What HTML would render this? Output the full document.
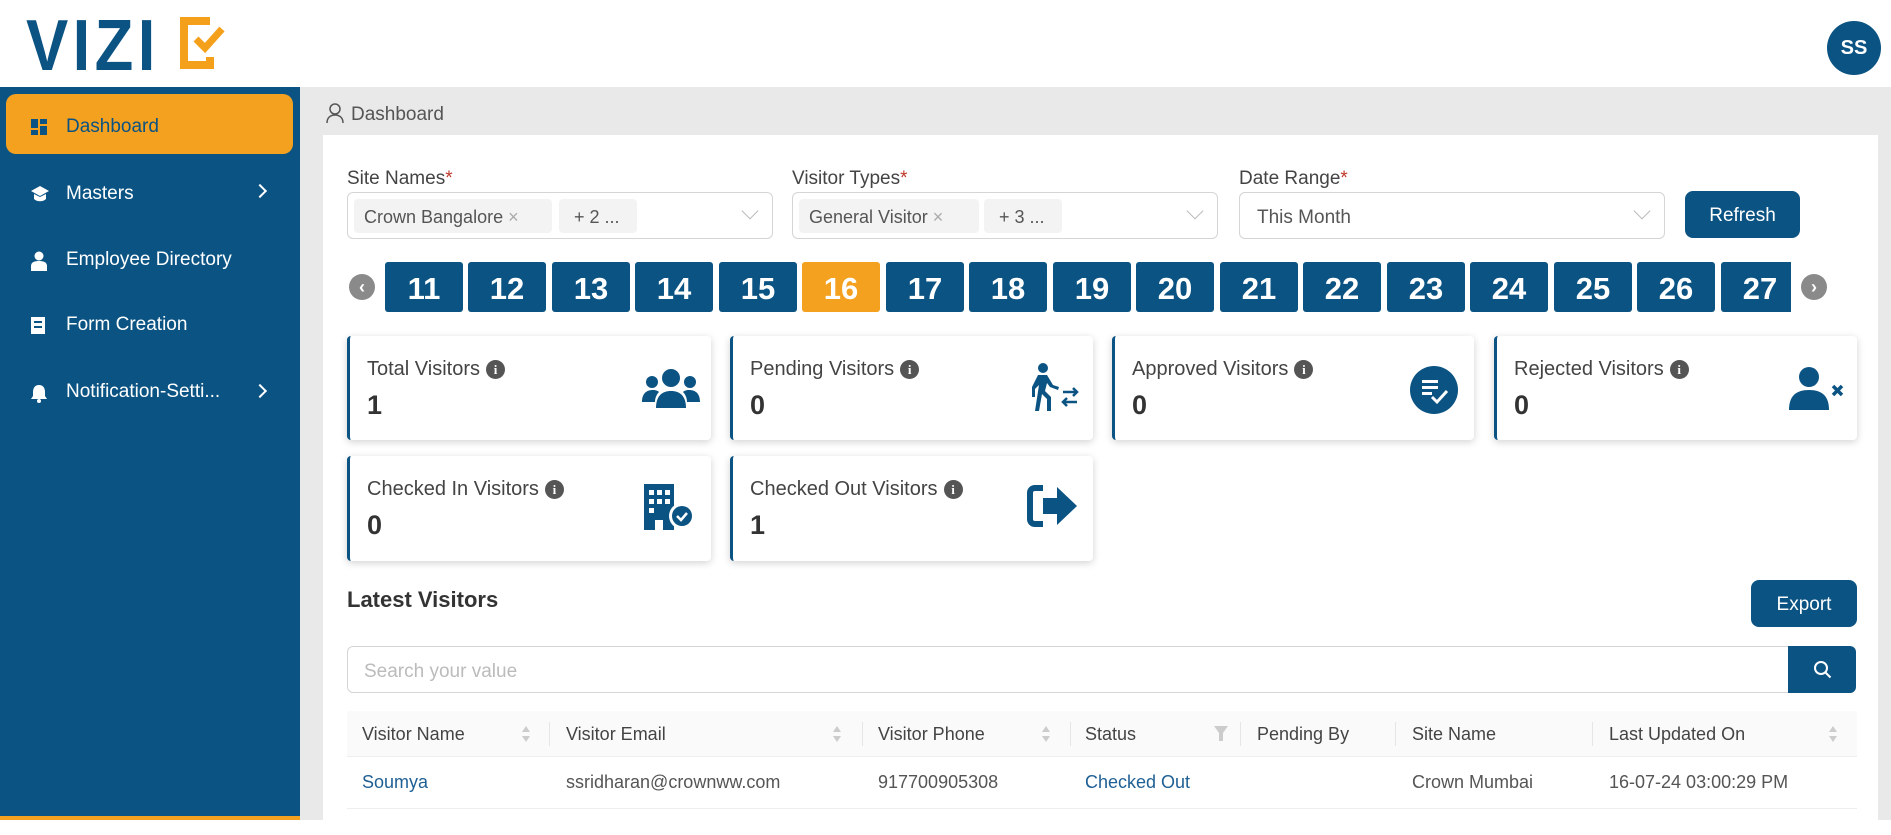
<!DOCTYPE html>
<html><head><meta charset="utf-8"><style>
*{box-sizing:border-box;margin:0;padding:0}
body{width:1891px;height:820px;overflow:hidden;font-family:"Liberation Sans",sans-serif;background:#fff;position:relative;color:#333}
.a{position:absolute}
.side{left:0;top:87px;width:300px;height:733px;background:#0b5383}
.mi{position:absolute;left:30px;color:#fff;font-size:19px;display:flex;align-items:center;gap:18px}
.mi .ic{width:18px;height:18px;display:inline-block}
.main{left:300px;top:87px;width:1591px;height:733px;background:#e9e9e9}
.panel{left:323px;top:135px;width:1555px;height:700px;background:#fff}
.lbl{font-size:19px;color:#444}
.lbl b{color:#c0392b;font-weight:normal}
.inp{height:47px;border:1px solid #d5d5d5;border-radius:6px;background:#fff}
.tag{position:absolute;top:6px;height:34px;background:#f3f3f3;border-radius:4px;font-size:18px;color:#555;line-height:36px;padding:0 10px}
.chev{position:absolute;right:16px;top:12px;width:12px;height:12px;border-right:1.5px solid #bbb;border-bottom:1.5px solid #bbb;transform:rotate(45deg)}
.btn{background:#0b5383;color:#fff;border-radius:8px;font-size:19px;display:flex;align-items:center;justify-content:center;padding-top:3px}
.d{position:absolute;top:262px;width:78px;height:50px;background:#0b5383;color:#fff;font-weight:bold;font-size:31px;display:flex;align-items:center;justify-content:center;border-radius:3px;padding-top:3px}
.card{background:#fff;border-left:3px solid #0b5383;border-radius:4px;box-shadow:0 2px 8px rgba(0,0,0,.18)}
.card .t{position:absolute;left:17px;top:22px;font-size:20px;color:#444;display:flex;align-items:center;gap:6px}
.card .n{position:absolute;left:17px;top:54px;font-size:27px;font-weight:bold;color:#333}
.info{width:19px;height:19px;border-radius:50%;background:#555;color:#fff;font-size:13px;font-weight:bold;display:inline-flex;align-items:center;justify-content:center;font-family:"Liberation Serif",serif}
.card svg{position:absolute}
.th{position:absolute;top:711px;height:46px;line-height:46px;font-size:18px;color:#444}
.td{position:absolute;top:757px;height:51px;line-height:51px;font-size:18px;color:#555}
.sep{position:absolute;top:722px;width:1px;height:24px;background:#e6e6e6}
.sort{position:absolute;top:724px;width:10px;height:20px}
</style></head><body>
<div class="a" style="left:26px;top:5px;font-size:72px;font-weight:bold;color:#0b5383;letter-spacing:5px;transform:scaleX(.88);transform-origin:left">VIZI</div>
<svg class="a" style="left:180px;top:17px" width="50" height="52" viewBox="0 0 50 52"><path d="M30 4H4V48H30V40" fill="none" stroke="#f5a01a" stroke-width="8"/><path d="M16 22l9 9 17-19" fill="none" stroke="#f5a01a" stroke-width="7"/></svg>
<div class="a" style="left:1827px;top:21px;width:54px;height:54px;border-radius:50%;background:#0b5383;color:#fff;font-weight:bold;font-size:20px;display:flex;align-items:center;justify-content:center">SS</div>

<div class="a side"></div>
<div class="a" style="left:0;top:816px;width:300px;height:4px;background:#f4a11f"></div>
<div class="a" style="left:6px;top:94px;width:287px;height:60px;background:#f4a11f;border-radius:10px"></div>
<div class="mi" style="top:116px;color:#0b5383"><span class="ic"><svg width="18" height="18"><rect x="1" y="1" width="7" height="9" fill="#0b5383"/><rect x="10" y="1" width="7" height="5" fill="#0b5383"/><rect x="1" y="12" width="7" height="5" fill="#0b5383"/><rect x="10" y="8" width="7" height="9" fill="#0b5383"/></svg></span>Dashboard</div>
<div class="mi" style="top:183px"><span class="ic"><svg width="20" height="18"><path d="M10 1L19 6 10 11 1 6z" fill="#fff"/><path d="M4 9v5c3 3 9 3 12 0V9l-6 3z" fill="#fff"/></svg></span>Masters</div>
<div class="a" style="left:255px;top:186px;width:10px;height:10px;border-right:2px solid #fff;border-top:2px solid #fff;transform:rotate(45deg)"></div>
<div class="mi" style="top:249px"><span class="ic"><svg width="18" height="20"><circle cx="9" cy="5" r="4.5" fill="#fff"/><path d="M1 20v-5c0-4 4-5 8-5s8 1 8 5v5z" fill="#fff"/></svg></span>Employee Directory</div>
<div class="mi" style="top:314px"><span class="ic"><svg width="16" height="18"><rect x="1" y="1" width="14" height="17" fill="#fff"/><rect x="4" y="5" width="8" height="2" fill="#0b5383"/><rect x="4" y="10" width="8" height="2" fill="#0b5383"/></svg></span>Form Creation</div>
<div class="mi" style="top:381px"><span class="ic"><svg width="18" height="20"><path d="M9 2c-4 0-6 3-6 7v4l-2 3h16l-2-3V9c0-4-2-7-6-7z" fill="#fff"/><circle cx="9" cy="18" r="2" fill="#fff"/></svg></span>Notification-Setti...</div>
<div class="a" style="left:255px;top:386px;width:10px;height:10px;border-right:2px solid #fff;border-top:2px solid #fff;transform:rotate(45deg)"></div>

<div class="a main"></div>
<svg class="a" style="left:326px;top:103px" width="18" height="20"><circle cx="9" cy="6" r="5" fill="none" stroke="#555" stroke-width="1.5"/><path d="M1 20c0-5 3-8 8-8s8 3 8 8" fill="none" stroke="#555" stroke-width="1.5"/></svg>
<div class="a" style="left:351px;top:104px;font-size:19px;color:#555">Dashboard</div>
<div class="a panel"></div>
<div class="a" style="left:1878px;top:87px;width:13px;height:733px;background:#e9e9e9"></div>

<div class="a lbl" style="left:347px;top:168px">Site Names<b>*</b></div>
<div class="a lbl" style="left:792px;top:168px">Visitor Types<b>*</b></div>
<div class="a lbl" style="left:1239px;top:168px">Date Range<b>*</b></div>
<div class="a inp" style="left:347px;top:192px;width:426px"><span class="tag" style="left:6px;width:198px">Crown Bangalore <span style="color:#aaa">×</span></span><span class="tag" style="left:211px;width:78px;padding:0 15px">+ 2 ...</span><span class="chev"></span></div>
<div class="a inp" style="left:792px;top:192px;width:426px"><span class="tag" style="left:6px;width:180px">General Visitor <span style="color:#aaa">×</span></span><span class="tag" style="left:191px;width:78px;padding:0 15px">+ 3 ...</span><span class="chev"></span></div>
<div class="a inp" style="left:1239px;top:192px;width:426px"><span style="position:absolute;left:17px;top:14px;font-size:19px;color:#555">This Month</span><span class="chev"></span></div>
<div class="a btn" style="left:1685px;top:191px;width:115px;height:47px">Refresh</div>

<div class="a" style="left:349px;top:274px;width:26px;height:26px;border-radius:50%;background:#8a8a8a;color:#fff;font-weight:bold;font-size:18px;display:flex;align-items:center;justify-content:center">‹</div>
<div class="a" style="left:1801px;top:274px;width:26px;height:26px;border-radius:50%;background:#8a8a8a;color:#fff;font-weight:bold;font-size:18px;display:flex;align-items:center;justify-content:center">›</div>
<div class="a" style="left:0;top:0;width:1791px;height:820px;overflow:hidden">
<div class="d" style="left:385px">11</div><div class="d" style="left:468px">12</div><div class="d" style="left:552px">13</div><div class="d" style="left:635px">14</div><div class="d" style="left:719px">15</div><div class="d" style="left:802px;background:#f4a11f">16</div><div class="d" style="left:886px">17</div><div class="d" style="left:969px">18</div><div class="d" style="left:1053px">19</div><div class="d" style="left:1136px">20</div><div class="d" style="left:1220px">21</div><div class="d" style="left:1303px">22</div><div class="d" style="left:1387px">23</div><div class="d" style="left:1470px">24</div><div class="d" style="left:1554px">25</div><div class="d" style="left:1637px">26</div><div class="d" style="left:1721px">27</div>
</div>

<div class="a card" style="left:347px;top:336px;width:364px;height:104px"><div class="t">Total Visitors <span class="info">i</span></div><div class="n">1</div>
<svg style="left:292px;top:32px" width="58" height="40" viewBox="0 0 58 40"><circle cx="29" cy="10" r="9" fill="#0b5383"/><circle cx="10" cy="14" r="6" fill="#0b5383"/><circle cx="48" cy="14" r="6" fill="#0b5383"/><path d="M14 40c0-12 6-17 15-17s15 5 15 17z" fill="#0b5383"/><path d="M0 34c0-8 4-12 11-12 3 0 5 1 6 2-3 3-4 7-4 10z" fill="#0b5383"/><path d="M58 34c0-8-4-12-11-12-3 0-5 1-6 2 3 3 4 7 4 10z" fill="#0b5383"/></svg></div>
<div class="a card" style="left:730px;top:336px;width:363px;height:104px"><div class="t">Pending Visitors <span class="info">i</span></div><div class="n">0</div>
<svg style="left:296px;top:26px" width="52" height="50" viewBox="0 0 52 50"><circle cx="14" cy="6" r="5" fill="#0b5383"/><path d="M9 13h9l6 10 6 2-1 3-8-3-3-4-2 8 6 6v14h-4V37l-5-5-3 17H6l4-26-4 4v8H3V25z" fill="#0b5383"/><path d="M34 30h14M44 26l4 4-4 4M48 40H34M38 36l-4 4 4 4" stroke="#0b5383" stroke-width="2.5" fill="none"/></svg></div>
<div class="a card" style="left:1112px;top:336px;width:362px;height:104px"><div class="t">Approved Visitors <span class="info">i</span></div><div class="n">0</div>
<svg style="left:295px;top:30px" width="48" height="48"><circle cx="24" cy="24" r="24" fill="#0b5383"/><rect x="12" y="14" width="16" height="3" fill="#fff"/><rect x="12" y="20" width="16" height="3" fill="#fff"/><rect x="12" y="26" width="10" height="3" fill="#fff"/><path d="M22 31l5 5 10-11" stroke="#fff" stroke-width="3" fill="none"/></svg></div>
<div class="a card" style="left:1494px;top:336px;width:363px;height:104px"><div class="t">Rejected Visitors <span class="info">i</span></div><div class="n">0</div>
<svg style="left:292px;top:30px" width="56" height="44"><circle cx="20" cy="11" r="10" fill="#0b5383"/><path d="M0 44c0-14 7-20 20-20s20 6 20 20z" fill="#0b5383"/><path d="M44 20l9 9M53 20l-9 9" stroke="#0b5383" stroke-width="3.5"/></svg></div>
<div class="a card" style="left:347px;top:456px;width:364px;height:105px"><div class="t">Checked In Visitors <span class="info">i</span></div><div class="n">0</div>
<svg style="left:292px;top:28px" width="56" height="46"><path d="M2 0h30v46H2z" fill="#0b5383"/><g fill="#fff"><rect x="7" y="6" width="5" height="5"/><rect x="15" y="6" width="5" height="5"/><rect x="23" y="6" width="5" height="5"/><rect x="7" y="15" width="5" height="5"/><rect x="15" y="15" width="5" height="5"/><rect x="23" y="15" width="5" height="5"/><rect x="7" y="24" width="5" height="5"/><rect x="13" y="36" width="8" height="10"/></g><circle cx="40" cy="32" r="13" fill="#fff"/><circle cx="40" cy="32" r="10" fill="#0b5383"/><path d="M35 32l4 4 6-7" stroke="#fff" stroke-width="2.5" fill="none"/></svg></div>
<div class="a card" style="left:730px;top:456px;width:363px;height:105px"><div class="t">Checked Out Visitors <span class="info">i</span></div><div class="n">1</div>
<svg style="left:294px;top:28px" width="52" height="44"><path d="M16 4H8C5 4 3 6 3 9v26c0 3 2 5 5 5h8" stroke="#0b5383" stroke-width="6" fill="none"/><path d="M16 14h14V3l20 19-20 19V30H16z" fill="#0b5383"/></svg></div>

<div class="a" style="left:347px;top:587px;font-size:22px;font-weight:bold;color:#333">Latest Visitors</div>
<div class="a btn" style="left:1751px;top:580px;width:106px;height:47px">Export</div>
<div class="a" style="left:347px;top:646px;width:1442px;height:47px;border:1px solid #d5d5d5;border-radius:6px 0 0 6px;font-size:19px;color:#bbb;padding:14px 16px 0">Search your value</div>
<div class="a" style="left:1788px;top:646px;width:68px;height:47px;background:#0b5383;border-radius:0 6px 6px 0"><svg style="position:absolute;left:25px;top:14px" width="20" height="20"><circle cx="8" cy="8" r="6" stroke="#fff" stroke-width="2" fill="none"/><path d="M12.5 12.5l5 5" stroke="#fff" stroke-width="2"/></svg></div>

<div class="a" style="left:347px;top:711px;width:1510px;height:46px;background:#fafafa;border-bottom:1px solid #eee"></div>
<div class="a" style="left:347px;top:808px;width:1510px;height:1px;background:#eee"></div>
<div class="th" style="left:362px">Visitor Name</div>
<div class="th" style="left:566px">Visitor Email</div>
<div class="th" style="left:878px">Visitor Phone</div>
<div class="th" style="left:1085px">Status</div>
<div class="th" style="left:1257px">Pending By</div>
<div class="th" style="left:1412px">Site Name</div>
<div class="th" style="left:1609px">Last Updated On</div>
<div class="sep" style="left:549px"></div><div class="sep" style="left:862px"></div><div class="sep" style="left:1070px"></div><div class="sep" style="left:1240px"></div><div class="sep" style="left:1395px"></div><div class="sep" style="left:1592px"></div>
<svg class="sort" style="left:521px" viewBox="0 0 10 20"><path d="M5 2l4 6H1z" fill="#ccc"/><path d="M5 18l4-6H1z" fill="#ccc"/></svg>
<svg class="sort" style="left:832px" viewBox="0 0 10 20"><path d="M5 2l4 6H1z" fill="#ccc"/><path d="M5 18l4-6H1z" fill="#ccc"/></svg>
<svg class="sort" style="left:1041px" viewBox="0 0 10 20"><path d="M5 2l4 6H1z" fill="#ccc"/><path d="M5 18l4-6H1z" fill="#ccc"/></svg>
<svg class="sort" style="left:1828px" viewBox="0 0 10 20"><path d="M5 2l4 6H1z" fill="#ccc"/><path d="M5 18l4-6H1z" fill="#ccc"/></svg>
<svg class="a" style="left:1214px;top:726px" width="14" height="16"><path d="M0 0h14L9 7v8H5V7z" fill="#ccc"/></svg>
<div class="td" style="left:362px;color:#1e5f94">Soumya</div>
<div class="td" style="left:566px">ssridharan@crownww.com</div>
<div class="td" style="left:878px">917700905308</div>
<div class="td" style="left:1085px;color:#1e5f94">Checked Out</div>
<div class="td" style="left:1412px">Crown Mumbai</div>
<div class="td" style="left:1609px">16-07-24 03:00:29 PM</div>
</body></html>
